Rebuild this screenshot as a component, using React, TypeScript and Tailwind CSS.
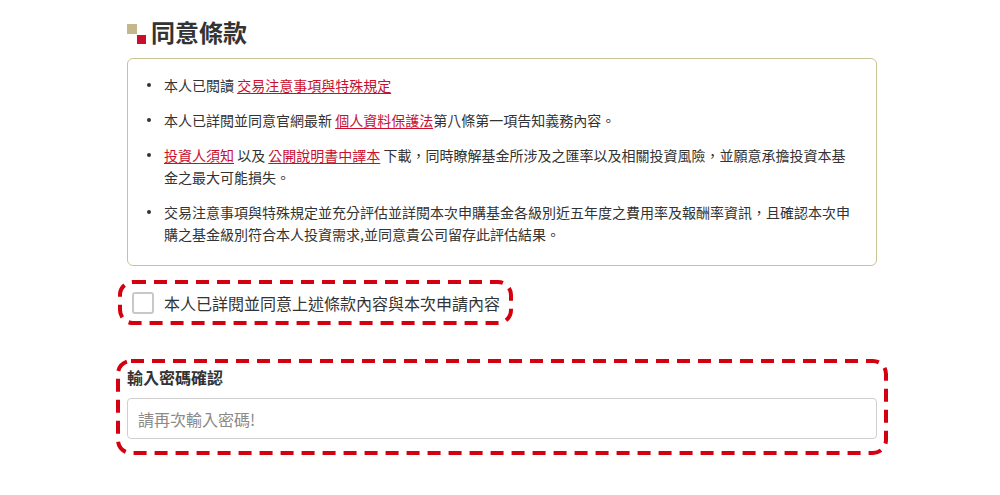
import React from 'react'

const FONT = "font-['Noto_Sans_CJK_TC','Noto_Sans_CJK_SC',sans-serif]"

// Red dashed annotation drawn over its content.
function Marker({ className = '', children }: { className?: string; children: React.ReactNode }) {
  return (
    <div className={`relative ${className}`}>
      {children}
      <svg className="pointer-events-none absolute left-[2px] top-[2px] h-[calc(100%-4px)] w-[calc(100%-4px)] overflow-visible">
        <rect
          width="100%"
          height="100%"
          rx="13"
          fill="none"
          stroke="#d40010"
          strokeWidth="4"
          strokeDasharray="13 8"
        />
      </svg>
    </div>
  )
}

function Link({ children }: { children: React.ReactNode }) {
  return <a className="text-[#c8102e] underline underline-offset-2 cursor-pointer">{children}</a>
}

const ITEMS: React.ReactNode[] = [
  <>
    本人已閱讀 <Link>交易注意事項與特殊規定</Link>
  </>,
  <>
    本人已詳閱並同意官網最新 <Link>個人資料保護法</Link>第八條第一項告知義務內容。
  </>,
  <>
    <Link>投資人須知</Link> 以及 <Link>公開說明書中譯本</Link>{' '}
    下載，同時瞭解基金所涉及之匯率以及相關投資風險，並願意承擔投資本基
    <br />
    金之最大可能損失。
  </>,
  <>
    交易注意事項與特殊規定並充分評估並詳閱本次申購基金各級別近五年度之費用率及報酬率資訊，且確認本次申購之基金級別符合本人投資需求,並同意貴公司留存此評估結果。
  </>,
]

export default function App() {
  return (
    <div className={`min-h-[495px] bg-white text-[#333] ${FONT}`}>
      <div className="ml-[127px] w-[750px] pt-[20px]">
        <div className="flex h-[28px] items-center">
          <div className="relative h-[20px] w-[20px] shrink-0">
            <span className="absolute left-0 top-0 h-[10px] w-[10px] bg-[#c4b78c]" />
            <span className="absolute left-[10px] top-[11px] h-[9px] w-[9px] bg-[#c8102e]" />
          </div>
          <h2 className="ml-[4px] mt-[-4px] text-[24px] font-bold leading-[28px] text-[#333]">同意條款</h2>
        </div>

        <div className="mt-[10px] rounded-[6px] border border-[#c9c495] pb-[20px] pl-[19px] pr-[20px] pt-[15px]">
          <ul className="flex flex-col gap-[13px]">
            {ITEMS.map((item, i) => (
              <li key={i} className="flex text-[14px] leading-[22px]">
                <span className="mt-[9px] h-[4px] w-[4px] shrink-0 rounded-full bg-[#333]" />
                <span className="ml-[13px] w-[687px]">{item}</span>
              </li>
            ))}
          </ul>
        </div>

        <Marker className="ml-[-9px] mt-[14px] h-[45px] w-[395px]">
          <label className="flex h-full items-center pl-[14px]">
            <span className="h-[22px] w-[22px] shrink-0 rounded-[3px] border-2 border-[#c8c8c8] bg-white" />
            <span className="ml-[10px] text-[16px] leading-[22px] text-[#333]">
              本人已詳閱並同意上述條款內容與本次申請內容
            </span>
          </label>
        </Marker>

        <Marker className="ml-[-11px] mt-[34px] h-[96px] w-[772px]">
          <div className="pl-[11px] pt-[7px]">
            <div className="text-[16px] font-bold leading-[22px] text-[#333]">輸入密碼確認</div>
            <input
              className="mt-[10px] h-[41px] w-[750px] rounded-[4px] border border-[#cfcfcf] bg-white px-[10px] text-[16px] text-[#333] outline-none placeholder:text-[#8a8a8a]"
              placeholder="請再次輸入密碼!"
              type="password"
            />
          </div>
        </Marker>
      </div>
    </div>
  )
}
